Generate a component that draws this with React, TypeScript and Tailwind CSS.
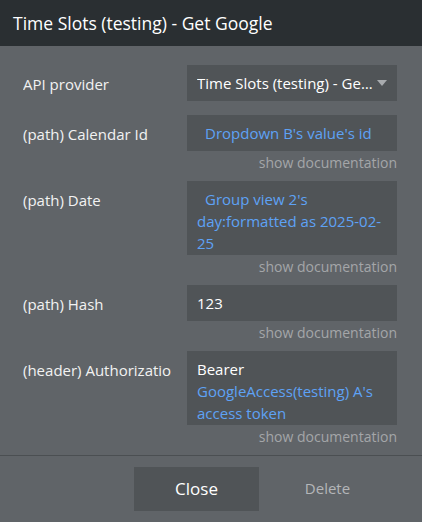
import { ReactNode } from "react";

// ── Field row: label on the left, value box and doc link on the right ────────
function FieldRow({ label, children, doc = true }: { label: string; children: ReactNode; doc?: boolean }) {
  return (
    <div className="flex">
      <div className="w-[164px] shrink-0 pt-[8px] text-[15px] leading-[22px] text-[#f2f2f2] whitespace-nowrap overflow-hidden">
        {label}
      </div>
      <div className="w-[210px] shrink-0">
        <div className="min-h-[36px] bg-[#505457] px-[10px] pt-[7px] pb-[1px] text-[15px] leading-[22px]">
          {children}
        </div>
        {doc && (
          <div className="text-right text-[14px] leading-[20px] pt-[2px] -mb-[1px] text-[#a4a6a8]">show documentation</div>
        )}
      </div>
    </div>
  );
}

export default function App() {
  return (
    <div
      className="w-[422px] h-[522px] bg-[#606468] flex flex-col overflow-hidden"
      style={{ fontFamily: '"Open Sans", "Noto Sans", sans-serif' }}
    >
      {/* Header */}
      <div className="h-[46px] shrink-0 bg-[#2a2f32] flex items-center px-[13px]">
        <span className="text-[17.5px] text-white">Time Slots (testing) - Get Google</span>
      </div>

      {/* Fields */}
      <div className="flex-1 pl-[23px] pt-[19px] flex flex-col gap-[9px]">
        <div className="mb-[5px]">
          <FieldRow label="API provider" doc={false}>
            <div className="flex items-center">
              <span className="min-w-0 truncate text-white">Time Slots (testing) - Get Google</span>
              <svg width="10" height="6" viewBox="0 0 10 6" className="ml-[1px] shrink-0">
                <path d="M0 0 L10 0 L5 6 Z" fill="#a8abae" />
              </svg>
            </div>
          </FieldRow>
        </div>

        <FieldRow label="(path) Calendar Id">
          <span className="ml-[8px] text-[#5ea2f5]">Dropdown B's value's id</span>
        </FieldRow>

        <FieldRow label="(path) Date">
          <span className="ml-[8px] text-[#5ea2f5]">Group view 2's day:formatted as 2025-02-25</span>
        </FieldRow>

        <FieldRow label="(path) Hash">
          <span className="text-white">123</span>
        </FieldRow>

        <FieldRow label="(header) Authorizatio">
          <span className="text-white">Bearer </span>
          <span className="text-[#5ea2f5]">GoogleAccess(testing) A's access token</span>
        </FieldRow>
      </div>

      {/* Footer */}
      <div className="h-[67px] shrink-0 border-t border-[#4b4f52] flex items-center pl-[134px] gap-[6px] pb-[1px]">
        <button className="w-[125px] h-[44px] bg-[#505457] text-[17px] text-white">Close</button>
        <button className="w-[125px] h-[44px] text-[15px] text-[#b4b6b8]">Delete</button>
      </div>
    </div>
  );
}
